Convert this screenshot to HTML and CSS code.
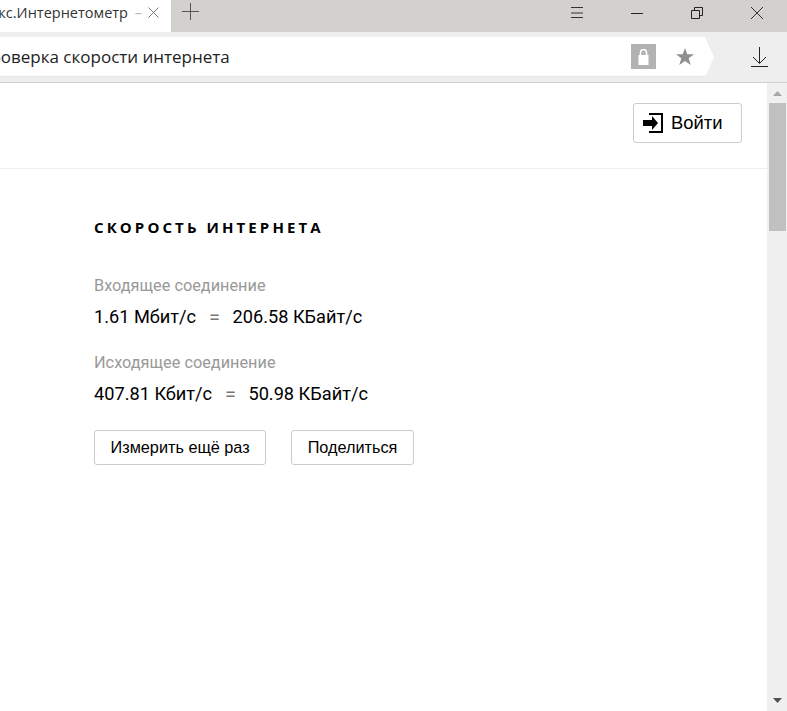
FILE: index.html
```html
<!DOCTYPE html>
<html lang="ru">
<head>
<meta charset="utf-8">
<title>Яндекс.Интернетометр</title>
<link rel="stylesheet" href="styles.css">
</head>
<body>
<div class="browser">
  <div class="tabbar">
    <div class="tab">
      <span class="tab-title">Яндекс.Интернетометр <span class="tab-dash">–</span></span>
      <svg class="tab-close" width="11" height="11" viewBox="0 0 11 11"><path d="M.5.5l10 10M10.5.5l-10 10" stroke="#777" fill="none"/></svg>
    </div>
    <svg class="tab-new" width="18" height="18" viewBox="0 0 18 18"><path d="M8.500 0v17M0 8.500h17" stroke="#555" fill="none"/></svg>
    <div class="win-controls">
      <svg class="win-icon" width="12" height="12" viewBox="0 0 12 12"><path d="M0 .5h12M0 6h12M0 10.500h12" stroke="#333" fill="none"/></svg>
      <svg class="win-icon" width="12" height="12" viewBox="0 0 12 12"><path d="M0 6.500h12" stroke="#222" fill="none"/></svg>
      <svg class="win-icon" width="12" height="12" viewBox="0 0 12 12"><path d="M.5 3.500h8v8h-8zM3.500 3.500v-3h8v8h-3" stroke="#222" fill="none"/></svg>
      <svg class="win-icon" width="12" height="12" viewBox="0 0 12 12"><path d="M0 0l12 12M12 0L0 12" stroke="#333" fill="none"/></svg>
    </div>
  </div>
  <div class="toolbar">
    <div class="address">
      <span class="address-text">Проверка скорости интернета</span>
      <span class="lock">
        <svg width="11" height="16" viewBox="0 0 11 16"><path d="M2.500 7V3.500a3 3 0 0 1 6 0V7" stroke="#fff" stroke-width="1.500" fill="none"/><rect x="0.500" y="6" width="10" height="10" fill="#fff"/></svg>
      </span>
      <svg class="star" width="18" height="17" viewBox="0 0 18 17"><path d="M9 0l2.300 6.200H18l-5.300 4.100 2 6.700L9 13l-5.700 4 2-6.700L0 6.200h6.700z" fill="#8f8f8f"/></svg>
    </div>
    <svg class="download" width="17" height="20" viewBox="0 0 17 20"><path d="M8.500 0v16M2 10l6.500 6.500L15 10M0 19.500h17" stroke="#222" fill="none"/></svg>
  </div>
  <div class="viewport">
    <main class="page">
      <header class="page-head">
        <button class="login">
          <svg width="20" height="20" viewBox="0 0 20 20"><path d="M6 1h13v18H6" stroke="#000" stroke-width="2" fill="none"/><path d="M0 7h9V3l6 7-6 7v-4H0z" fill="#000"/></svg>
          <span>Войти</span>
        </button>
      </header>
      <section class="content">
        <h1 class="title">СКОРОСТЬ ИНТЕРНЕТА</h1>
        <div class="label label-first">Входящее соединение</div>
        <div class="value"><span>1.61 Мбит/с</span><span class="eq">=</span><span>206.58 КБайт/с</span></div>
        <div class="label label-second">Исходящее соединение</div>
        <div class="value"><span>407.81 Кбит/с</span><span class="eq">=</span><span>50.98 КБайт/с</span></div>
        <div class="actions">
          <button class="btn">Измерить ещё раз</button>
          <button class="btn">Поделиться</button>
        </div>
      </section>
    </main>
    <div class="scrollbar">
      <svg class="arrow" width="9" height="5" viewBox="0 0 9 5"><path d="M4.500 0L9 5H0z" fill="#a6a6a6"/></svg>
      <div class="thumb"></div>
      <svg class="arrow arrow-down" width="9" height="5" viewBox="0 0 9 5"><path d="M0 0h9L4.500 5z" fill="#505050"/></svg>
    </div>
  </div>
</div>
</body>
</html>
```
FILE: styles.css
```css
* { box-sizing: border-box; }
html, body { margin: 0; padding: 0; height: 100%; overflow: hidden; background: #fff; }
.browser { display: flex; flex-direction: column; width: 787px; height: 711px; }

.tabbar { display: flex; align-items: flex-start; height: 32px; background: #d3d1cd; flex: none; }
.tab { display: flex; align-items: center; justify-content: flex-end; width: 171px; height: 32px; background: #fff; padding: 0 12px 7px 0; overflow: hidden; flex: none; }
.tab-title { font: 14.500px "Open Sans", sans-serif; color: #333; white-space: nowrap; margin-right: 6px; word-spacing: 3px; }
.tab-dash { color: #b5b5b5; }
.tab-close { flex: none; }
.tab-new { margin: 3px 0 0 11px; flex: none; }
.win-controls { display: flex; align-items: flex-start; margin-left: auto; padding-top: 7px; height: 32px; }
.win-icon { display: block; margin-right: 48px; }
.win-icon:last-child { margin-right: 24px; }

.toolbar { display: flex; align-items: flex-start; height: 51px; padding-top: 5px; background: #eee; border-bottom: 1px solid #cfcfcf; flex: none; }
.address { display: flex; align-items: center; width: 714px; height: 40px; background: #fff; clip-path: polygon(0 0, 705px 0, 714px 50%, 705px 100%, 0 100%); border-bottom: 1px solid #e6e6e6; overflow: hidden; flex: none; }
.address-text { font: 17px "Open Sans", sans-serif; color: #222; white-space: nowrap; margin-left: -22px; }
.lock { display: flex; align-items: center; justify-content: center; width: 25px; height: 25px; background: #b2b2b2; margin-left: auto; margin-right: 20px; }
.star { margin-right: 20px; flex: none; }
.download { margin-left: 37px; margin-top: 10px; flex: none; }

.viewport { display: flex; flex: 1; min-height: 0; }
.page { flex: 1; min-width: 0; }
.page-head { display: flex; justify-content: flex-end; align-items: flex-start; height: 86px; padding: 20px 25px 0 0; border-bottom: 1px solid #eee; }
button { font-family: "Liberation Sans", Arial, sans-serif; background: #fff; color: #000; cursor: pointer; }
.login { display: flex; align-items: center; gap: 8px; width: 109px; height: 40px; padding: 0 0 0 9px; border: 1px solid #ccc; border-radius: 3px; font-size: 18.400px; }
.content { padding: 48px 0 0 94px; font-family: Roboto, sans-serif; }
.title { margin: 0; font: 700 15px/20px "Open Sans", sans-serif; letter-spacing: 3.100px; color: #000; }
.label { font-size: 16.300px; line-height: 20px; color: #999; }
.label-first { margin-top: 39px; }
.label-second { margin-top: 24px; }
.value { display: flex; font-size: 18.200px; line-height: 24px; color: #000; margin-top: 9px; }
.eq { color: #777; font-size: 20px; margin: 0 12.500px 0 13px; }
.actions { display: flex; gap: 25px; margin-top: 24px; }
.btn { height: 35px; padding: 0 15.500px; border: 1px solid #ccc; border-radius: 3px; font-size: 16.250px; }

.scrollbar { display: flex; flex-direction: column; align-items: center; width: 20px; background: #f0f0f0; flex: none; padding: 8px 0 8px 1px; }
.arrow { flex: none; }
.thumb { width: 17px; height: 128px; margin-top: 7px; background: #c0c0c0; flex: none; }
.arrow-down { margin-top: auto; }
```
